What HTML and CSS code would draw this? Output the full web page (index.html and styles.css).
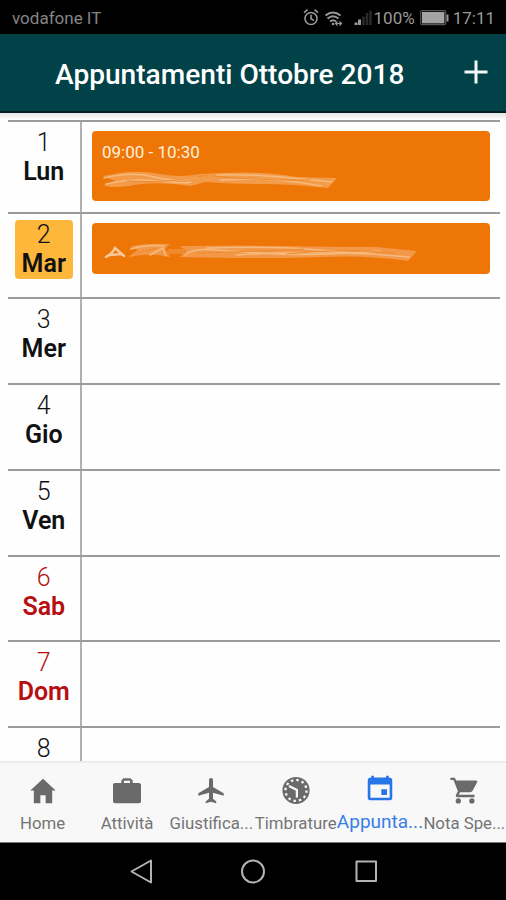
FILE: index.html
```html
<!DOCTYPE html>
<html lang="it">
<head>
<meta charset="utf-8">
<title>Appuntamenti</title>
<link rel="stylesheet" href="styles.css">
</head>
<body>
<div class="phone">
  <div class="status">
    <span class="carrier">vodafone IT</span>
    <svg class="status-icons" width="72" height="20" viewBox="0 0 72 20" fill="none" stroke="#999" stroke-width="1.6">
      <circle cx="10" cy="10.500" r="6"/><path d="M10 6.700v4l3 2M3 4.700l3.500-3M17 4.700l-3.500-3"/>
      <path d="M24.500 7.500q7.500-6 15 0M26.500 10.500q5.500-4.500 11 0M29 13.500q3-2.500 6 0" stroke-width="2"/><circle cx="32" cy="16" r="1.300" fill="#999" stroke="none"/><path d="M35 15.500h5M36.500 13.500l-2 2 2 2M38.500 13.500l2 2-2 2" stroke-width="1.200"/>
      <path d="M55 17v-2.500M58.500 17v-5.500" stroke-width="3"/><path d="M62.500 17V8.500M66 17V5M69.500 17V2.500" stroke="#292929" stroke-width="2.600"/>
    </svg>
    <span class="percent">100%</span>
    <svg class="battery" width="29" height="16" viewBox="0 0 29 16"><rect x=".7" y=".7" width="25" height="14" rx="1.500" fill="none" stroke="#555" stroke-width="1.200"/><rect x="2" y="2" width="22.400" height="11.400" fill="#a3a3a3"/><path d="M26.500 4.500h2v7h-2z" fill="#999"/></svg>
    <span class="time">17:11</span>
  </div>
  <header class="header">
    <h1>Appuntamenti Ottobre 2018</h1>
    <svg class="add" width="24" height="24" viewBox="0 0 24 24"><path d="M12 .5v23M.5 12h23" stroke="#f3f7f7" stroke-width="3"/></svg>
  </header>
  <main class="agenda">
    <section class="row first">
      <div class="day"><div class="date"><span>1</span><b>Lun</b></div></div>
      <div class="events"><div class="event tall"><span>09:00 - 10:30</span>
        <svg class="scribble" width="240" height="24" viewBox="0 0 240 24" fill="none" stroke-linecap="round">
          <path d="M1 8L18 5Q38 2 58 6T98 6L120 5Q165 3 195 9L235 10L226 20Q190 16 160 16T104 14L88 18Q55 13 32 17T2 17L13 13Z" fill="#f39b49"/>
          <path d="M2 10Q30 3 52 9T95 9M4 16Q30 10 57 13T89 14M115 7Q155 5 230 14M118 12Q175 9 219 18" stroke="#f6ba7e" stroke-width="1.500"/>
          <path d="M25 13Q65 16 105 7M110 8Q160 13 208 12" stroke="#f08a2d" stroke-width="1"/>
        </svg></div></div>
    </section>
    <section class="row">
      <div class="day"><div class="date today"><span>2</span><b>Mar</b></div></div>
      <div class="events"><div class="event short">
        <svg class="scribble" width="320" height="24" viewBox="0 0 320 24" fill="none" stroke-linecap="round">
          <path d="M4 16Q11 12 13 7L22 15M8 14L20 13" stroke="#f8c999" stroke-width="2.500"/>
          <path d="M28 6Q39 2 68 3L63 8 68 16Q50 11 26 16L36 9ZM78 5L92 5Q125 4 175 5T274 6L315 10 306 20Q265 14 220 16T78 16L84 10Z" fill="#f29848"/>
          <path d="M66 8h18v5H64z" fill="#f08a2d"/>
          <path d="M29 8Q45 3 62 5M48 14l13-7 3 8M83 14Q90 7 115 9T175 13T278 10M105 7Q170 5 205 8T307 16M135 14Q190 10 270 13" stroke="#f6ba7e" stroke-width="1.500"/>
          <path d="M35 12l20-5M95 12Q165 10 202 8M185 13Q240 7 293 12" stroke="#ef8b2d" stroke-width="1"/>
        </svg></div></div>
    </section>
    <section class="row"><div class="day"><div class="date"><span>3</span><b>Mer</b></div></div><div class="events"></div></section>
    <section class="row"><div class="day"><div class="date"><span>4</span><b>Gio</b></div></div><div class="events"></div></section>
    <section class="row"><div class="day"><div class="date"><span>5</span><b>Ven</b></div></div><div class="events"></div></section>
    <section class="row holiday"><div class="day"><div class="date"><span>6</span><b>Sab</b></div></div><div class="events"></div></section>
    <section class="row holiday"><div class="day"><div class="date"><span>7</span><b>Dom</b></div></div><div class="events"></div></section>
    <section class="row"><div class="day"><div class="date"><span>8</span></div></div><div class="events"></div></section>
  </main>
  <nav class="tabs">
    <div class="tab"><svg viewBox="0 0 32 32"><path d="M16 3L1.500 16.500h4V31h7.500v-9h6v9h7.500V16.500h4z"/></svg><span>Home</span></div>
    <div class="tab"><svg viewBox="0 0 32 32"><path fill-rule="evenodd" d="M9.500 8V5L12 2.500h8L22.500 5v3h7q2.500 0 2.500 2v19q0 2-2.500 2h-27Q0 31 0 29V10q0-2 2.500-2zM12.500 8h7V5.500h-7z"/></svg><span>Attività</span></div>
    <div class="tab"><svg viewBox="0 0 32 32"><path d="M30.500 22.500v-2.800l-12.200-7.200V4.500q0-2.300-2.300-2.300t-2.300 2.300v8L1.500 19.700v2.800l12.200-3.500v7L10 29v2l6-1.500 6 1.500v-2l-3.700-3v-7z"/></svg><span>Giustifica...</span></div>
    <div class="tab"><svg viewBox="0 0 32 32"><circle cx="16" cy="16.500" r="15.500"/><circle cx="16" cy="16.500" r="12" fill="none" stroke="#f8f8f8" stroke-width="2.600" stroke-dasharray="2.800 3.483"/><path d="M8 11.500l9 4.500v8.500" fill="none" stroke="#f8f8f8" stroke-width="2.600"/></svg><span>Timbrature</span></div>
    <div class="tab active"><svg viewBox="0 0 32 32"><path fill-rule="evenodd" d="M6 2h3v2h14V2h3v2q4 0 4 3v20q0 3-4 3H6q-4 0-4-3V7q0-3 4-3zM5 12v15.200h22V12zM17.500 17.500h6.500v6.500h-6.500z"/></svg><span>Appunta...</span></div>
    <div class="tab"><svg viewBox="0 0 32 32"><path d="M.5 2h5L7 5h22.500q2.500 0 1.500 2l-5 9.500q-1 2-3 2H11.500L10 21.500h18v2.700H9q-3.500 0-2-3.200l2-3.500L4 4.700H.5z"/><circle cx="9.500" cy="28.500" r="3"/><circle cx="25" cy="28.500" r="3"/></svg><span>Nota Spe...</span></div>
  </nav>
  <div class="system">
    <svg viewBox="0 0 28 28"><path d="M24 2.500v22L4.500 13.500z"/></svg>
    <svg viewBox="0 0 28 28"><circle cx="14" cy="13.500" r="11"/></svg>
    <svg viewBox="0 0 28 28"><rect x="4.500" y="3.500" width="19.500" height="19.500"/></svg>
  </div>
</div>
</body>
</html>
```
FILE: styles.css
```css
* { box-sizing: border-box; }
body { margin: 0; background: #000; font-family: Roboto, sans-serif; }
.phone { width: 506px; height: 900px; display: flex; flex-direction: column; overflow: hidden; background: #fff; }
.status { height: 34px; flex: none; display: flex; align-items: center; background: #000; color: #999; font-size: 17px; padding: 2px 11px 0 12px; }
.carrier { color: #858585; font-size: 17px; }
.status-icons { margin-left: auto; }
.percent { margin-left: 1px; }
.battery { margin: 0 4px 0 5px; }
.header { height: 79px; flex: none; display: flex; align-items: center; background: #014148; border-bottom: 2px solid #001e22; padding: 0 18px 0 55px; }
.header h1 { margin: 4px 0 0; color: #fff; font-size: 28.1px; line-height: 32px; font-weight: 500; white-space: nowrap; }
.add { margin: -1px 0 0 auto; }
.agenda { flex: 1; min-height: 0; overflow: hidden; padding: 7px 6px 0 8px; background: linear-gradient(#e4e4e4, #fefefe 7px); }
.row { height: 85.8px; display: flex; border-top: 2px solid #9b9b9b; }
.first { height: 91.5px; }
.day { width: 74px; flex: none; border-right: 2px solid #b1b1b1; padding: 6px 7px 0 6.500px; }
.date { height: 59px; display: flex; flex-direction: column; align-items: center; color: #111; font-size: 25px; line-height: 29px; border-radius: 4px; }
.date span { font-weight: 300; height: 29px; }
.date b { font-weight: 600; font-size: 25px; line-height: 30px; }
.today { background: #fdb73a; }
.holiday .date { color: #b80f12; }
.events { flex: 1; padding: 9px 10px 0; }
.event { background: #ee7606; border-radius: 4px; color: #fff1df; padding: 12px 10px 0; font-size: 17px; line-height: 19px; }
.event .scribble { display: block; }
.tall { height: 70px; }
.tall .scribble { margin-top: 6px; }
.short { height: 51px; padding-top: 18px; }
.tabs { height: 81px; flex: none; display: grid; grid-template-columns: repeat(6, 1fr); background: #f8f8f8; border-top: 2px solid #ececec; }
.tab { min-width: 0; display: flex; flex-direction: column; align-items: center; color: #747474; font-size: 16.8px; padding: 13px 0 0 1px; white-space: nowrap; }
.tab svg { width: 28px; height: 28px; flex: none; fill: #6a6a6a; }
.tab span { margin-top: 8px; line-height: 22px; }
.active { color: #387ee7; font-size: 19px; padding-top: 11px; }
.tab.active svg { fill: #2676e8; }
.tab.active span { margin-top: 9px; }
.system { height: 58px; flex: none; display: flex; justify-content: center; align-items: center; gap: 84.500px; background: #000; border-top: 1px solid #777; }
.system svg { width: 28px; height: 28px; fill: none; stroke: #b3b3b3; stroke-width: 2; stroke-linejoin: round; }
```
